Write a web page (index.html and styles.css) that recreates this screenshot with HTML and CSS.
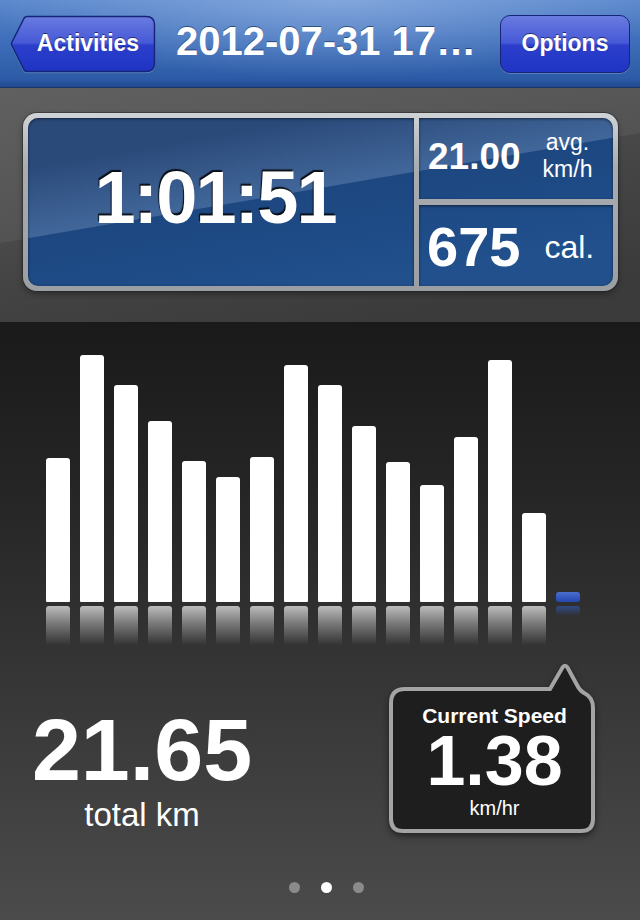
FILE: index.html
```html
<!DOCTYPE html>
<html>
<head>
<meta charset="utf-8">
<title>Activity</title>
<link rel="stylesheet" href="styles.css">
</head>
<body>
<div class="screen">
  <header class="navbar">
    <div class="nav-btn back">
      <svg class="btn-shape" width="146" height="58" viewBox="0 0 146 58">
        <defs>
          <linearGradient id="btnGrad" x1="0" y1="0" x2="0" y2="1">
            <stop offset="0" stop-color="#6a7be0"/>
            <stop offset="0.48" stop-color="#4659d6"/>
            <stop offset="0.52" stop-color="#2b3fcb"/>
            <stop offset="1" stop-color="#1f34c4"/>
          </linearGradient>
        </defs>
        <path d="M 17 1.5 H 136 Q 144.5 1.5 144.5 10 V 48 Q 144.5 56.5 136 56.5 H 17 Q 15.2 56.5 14.2 55 L 1.8 30.5 Q 1 29 1.8 27.5 L 14.2 3 Q 15.2 1.5 17 1.5 Z" fill="url(#btnGrad)" stroke="#15267a" stroke-width="1.5"/>
      </svg>
      <span class="btn-label">Activities</span>
    </div>
    <h1 class="title">2012-07-31 17…</h1>
    <div class="nav-btn options"><span class="btn-label">Options</span></div>
  </header>

  <section class="summary">
    <div class="panel">
      <div class="cell time"><span class="time-value">1:01:51</span></div>
      <div class="cell speed">
        <span class="speed-value">21.00</span>
        <span class="unit-stack"><span>avg.</span><span>km/h</span></span>
      </div>
      <div class="cell calories">
        <span class="cal-value">675</span>
        <span class="cal-unit">cal.</span>
      </div>
    </div>
  </section>

  <section class="stats">
    <div class="chart">
      <div class="bar" style="height:144px"></div>
      <div class="bar" style="height:247px"></div>
      <div class="bar" style="height:217px"></div>
      <div class="bar" style="height:181px"></div>
      <div class="bar" style="height:141px"></div>
      <div class="bar" style="height:125px"></div>
      <div class="bar" style="height:145px"></div>
      <div class="bar" style="height:237px"></div>
      <div class="bar" style="height:217px"></div>
      <div class="bar" style="height:176px"></div>
      <div class="bar" style="height:140px"></div>
      <div class="bar" style="height:117px"></div>
      <div class="bar" style="height:165px"></div>
      <div class="bar" style="height:242px"></div>
      <div class="bar" style="height:89px"></div>
      <div class="bar current" style="height:10px"></div>
    </div>
    <div class="reflection">
      <div class="refl"></div><div class="refl"></div><div class="refl"></div><div class="refl"></div>
      <div class="refl"></div><div class="refl"></div><div class="refl"></div><div class="refl"></div>
      <div class="refl"></div><div class="refl"></div><div class="refl"></div><div class="refl"></div>
      <div class="refl"></div><div class="refl"></div><div class="refl"></div>
      <div class="refl current"></div>
    </div>

    <div class="readouts">
      <div class="total">
        <div class="total-value">21.65</div>
        <div class="total-label">total km</div>
      </div>
      <div class="bubble">
        <svg class="bubble-shape" width="206" height="174" viewBox="0 0 206 174">
          <path d="M 16 26 H 161 L 173.5 4.5 Q 176 1 178.5 4.5 L 188 22 Q 191 28 196 30.5 Q 204 34.5 204 45 V 156 Q 204 168 192 168 H 14 Q 2 168 2 156 V 40 Q 2 26 16 26 Z" fill="#1e1e1f" stroke="#a4a4a4" stroke-width="4"/>
        </svg>
        <div class="bubble-content">
          <div class="bubble-title">Current Speed</div>
          <div class="bubble-value">1.38</div>
          <div class="bubble-unit">km/hr</div>
        </div>
      </div>
    </div>

    <div class="dots">
      <span class="dot"></span><span class="dot active"></span><span class="dot"></span>
    </div>
  </section>
</div>
</body>
</html>
```

FILE: styles.css
```css
* { box-sizing: border-box; }

html, body {
  margin: 0;
  padding: 0;
  background: #1a1a1a;
}

body {
  font-family: "Liberation Sans", Arial, Helvetica, sans-serif;
  color: #fff;
}

.screen {
  width: 640px;
  height: 920px;
  overflow: hidden;
  display: flex;
  flex-direction: column;
}

/* ---------- Nav bar ---------- */
.navbar {
  height: 88px;
  flex: none;
  display: flex;
  align-items: center;
  padding: 0 10px;
  background:
    radial-gradient(ellipse 55% 90% at 52% 0%, rgba(180, 205, 240, 0.45), rgba(180, 205, 240, 0) 100%),
    linear-gradient(#5a87cc 0%, #3f6fba 45%, #2d5ba7 90%, #224a90 100%);
  border-bottom: 1px solid #1b3566;
}

.nav-btn {
  position: relative;
  height: 58px;
  display: flex;
  align-items: center;
  justify-content: center;
  flex: none;
}

.back {
  width: 146px;
  padding-left: 10px;
}

.btn-shape {
  position: absolute;
  left: 0;
  top: 0;
  filter: drop-shadow(0 1px 0 rgba(255, 255, 255, 0.22));
}

.options {
  width: 130px;
  border-radius: 10px;
  border: 1.5px solid #15267a;
  background: linear-gradient(#6a7be0 0%, #4659d6 48%, #2b3fcb 52%, #1f34c4 100%);
  box-shadow: 0 1px 0 rgba(255, 255, 255, 0.22);
}

.btn-label {
  position: relative;
  font-size: 23px;
  font-weight: bold;
  color: #fff;
  text-shadow: 0 -1px 0 rgba(0, 0, 30, 0.55);
  margin-bottom: 1px;
}

.title {
  flex: 1;
  margin: 0 0 5px 0;
  padding-right: 4px;
  text-align: center;
  font-size: 40px;
  line-height: 1;
  font-weight: bold;
  color: #fff;
  white-space: nowrap;
  text-shadow: 0 -1px 0 rgba(0, 20, 60, 0.55);
}

/* ---------- Summary ---------- */
.summary {
  height: 234px;
  flex: none;
  padding: 25px 22px 0 23px;
  background: linear-gradient(170.25deg,
      #676767 0px, #5b5b5b 150px, #535353 239px,
      #494949 240px, #444444 280px, #3b3b3b 380px) fixed;
}

.panel {
  width: 595px;
  height: 178px;
  padding: 5px;
  border-radius: 14px;
  background: linear-gradient(#d0d3d6, #a9adb1 30%, #9b9fa3);
  box-shadow: 0 0 0 1px rgba(30, 30, 30, 0.45), 0 3px 6px rgba(0, 0, 0, 0.35);
  display: grid;
  grid-template-columns: 386px 194px;
  grid-template-rows: 81px 81px;
  column-gap: 5px;
  row-gap: 6px;
}

.cell {
  background: linear-gradient(170.25deg,
      #2a4a7a 170px, #3a5d8f 215px, #41679a 239px,
      #1d4780 240px, #1e4b86 290px, #21508d 340px) fixed;
  box-shadow: inset 0 1px 3px rgba(0, 0, 0, 0.55);
  display: flex;
  align-items: center;
}

.time {
  grid-row: 1 / 3;
  border-radius: 10px 0 0 10px;
  justify-content: center;
  padding: 0 12px 8px 0;
}

.time-value {
  font-size: 74px;
  line-height: 1;
  font-weight: bold;
  letter-spacing: -2px;
  text-shadow: -1px -2px 1px rgba(0, 0, 0, 0.85);
}

.speed {
  border-radius: 0 10px 0 0;
  padding-left: 9px;
  gap: 22px;
}

.speed-value {
  font-size: 37px;
  line-height: 1;
  font-weight: bold;
  margin-bottom: 4px;
}

.unit-stack {
  display: flex;
  flex-direction: column;
  align-items: center;
  font-size: 23px;
  line-height: 27px;
  margin-bottom: 6px;
}

.calories {
  border-radius: 0 0 10px 0;
  padding-left: 8px;
  gap: 24px;
  align-items: baseline;
  padding-top: 14px;
}

.cal-value {
  font-size: 56px;
  line-height: 1;
  font-weight: bold;
}

.cal-unit {
  font-size: 32px;
  line-height: 1;
  position: relative;
  top: -8px;
}

/* ---------- Stats ---------- */
.stats {
  flex: 1;
  background: linear-gradient(#1a1a1a 0%, #262626 30%, #363636 60%, #4b4b4b 100%);
  display: flex;
  flex-direction: column;
}

.chart {
  height: 280px;
  display: flex;
  align-items: flex-end;
  gap: 10px;
  padding-left: 46px;
}

.bar {
  width: 24px;
  background: #fff;
  border-radius: 3px 3px 1px 1px;
}

.bar.current {
  background: linear-gradient(#4a6ed0, #2447b0);
  border-radius: 3px;
}

.reflection {
  margin-top: 4px;
  height: 39px;
  display: flex;
  align-items: flex-start;
  gap: 10px;
  padding-left: 46px;
}

.refl {
  width: 24px;
  height: 39px;
  border-radius: 3px 3px 0 0;
  background: linear-gradient(rgba(255, 255, 255, 0.68), rgba(255, 255, 255, 0.35) 45%, rgba(255, 255, 255, 0) 100%);
}

.refl.current {
  height: 10px;
  background: linear-gradient(rgba(50, 90, 190, 0.6), rgba(50, 90, 190, 0));
}

.readouts {
  margin-top: 18px;
  display: flex;
  justify-content: space-between;
  padding: 0 45px 0 17px;
}

.total {
  width: 250px;
  text-align: center;
  padding-top: 43px;
}

.total-value {
  font-size: 88px;
  line-height: 1;
  font-weight: bold;
}

.total-label {
  margin-top: 4px;
  font-size: 33px;
  line-height: 1;
}

.bubble {
  position: relative;
  width: 206px;
  height: 174px;
}

.bubble-shape {
  position: absolute;
  left: 0;
  top: 0;
  filter: drop-shadow(0 3px 3px rgba(0, 0, 0, 0.5));
}

.bubble-content {
  position: relative;
  padding: 43px 0 0 5px;
  text-align: center;
}

.bubble-title {
  font-size: 21px;
  line-height: 20px;
  font-weight: bold;
}

.bubble-value {
  margin-top: 4px;
  font-size: 70px;
  line-height: 62px;
  font-weight: bold;
}

.bubble-unit {
  margin-top: 6px;
  font-size: 20px;
  line-height: 20px;
}

.dots {
  margin-top: 45px;
  display: flex;
  justify-content: center;
  gap: 21px;
  padding-left: 12px;
}

.dot {
  width: 11px;
  height: 11px;
  border-radius: 50%;
  background: #8a8a8a;
}

.dot.active {
  background: #fff;
}
```
